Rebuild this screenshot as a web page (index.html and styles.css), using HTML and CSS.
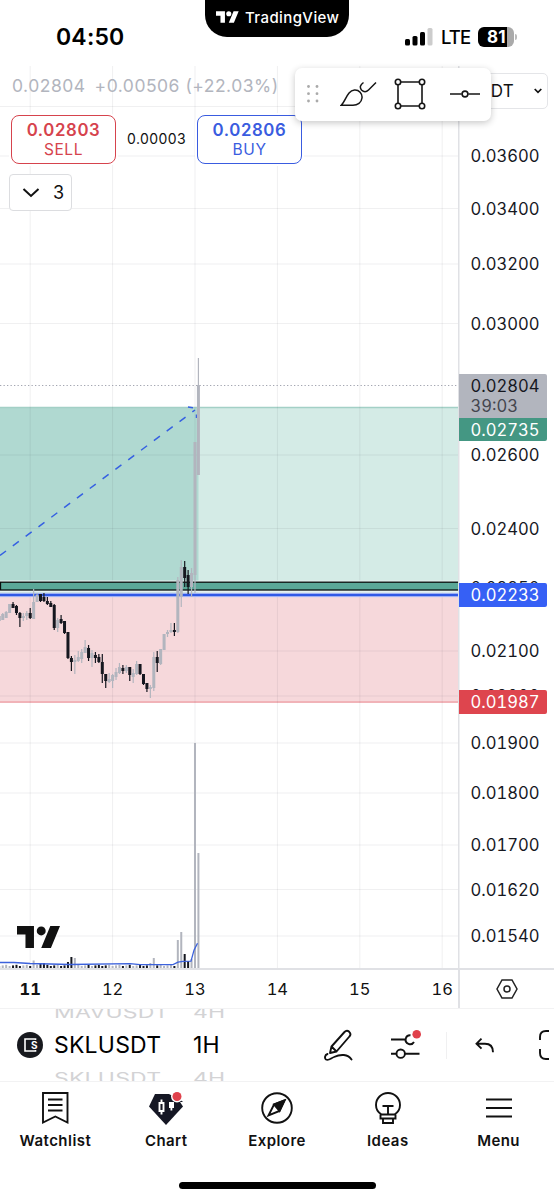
FILE: index.html
```html
<!DOCTYPE html>
<html lang="en">
<head>
<meta charset="utf-8">
<meta name="viewport" content="width=device-width, initial-scale=1">
<title>SKLUSDT 1H</title>
<link rel="stylesheet" href="styles.css">
</head>
<body>
<div class="app">

  <header class="status">
    <div class="clock">04:50</div>
    <div class="brand">
      <svg width="23" height="12" viewBox="0 4 36 18" fill="#fff"><path d="M14 22H7V11H0V4h14v18zM28 22h-8l7.500-18h8L28 22z"/><circle cx="20" cy="8" r="4"/></svg>
      <span>TradingView</span>
    </div>
    <div class="signal">
      <svg width="28" height="18" viewBox="0 0 28 18"><rect x="0" y="11" width="5" height="6.500" rx="1.500"/><rect x="7.500" y="8" width="5" height="9.500" rx="1.500"/><rect x="15" y="4" width="5" height="13.500" rx="1.500"/><rect x="22.500" y="0" width="5" height="17.500" rx="1.500" fill="#ccc"/></svg>
      <span class="network">LTE</span>
      <span class="battery">81</span>
      <span class="battery-tip"></span>
    </div>
  </header>

  <main class="chart">
    <svg class="plot" id="plot" width="458" height="902" viewBox="0 66 458 902">
      <rect x="0" y="407" width="458" height="188" fill="#d4ebe6"/>
      <rect x="0" y="407" width="198.500" height="188" fill="#b0d9d1"/>
      <rect x="0" y="597" width="458" height="106" fill="#f6d8db"/>
      <path d="M0 407.500h458" stroke="#a3d0c6" stroke-width="1.300"/>
      <path d="M0 702h458" stroke="#f1b3b8" stroke-width="2"/>
      <g id="grid" stroke="#2a2e39" stroke-opacity=".07"></g>
      <path d="M0 385.500h458" stroke="#a3a6b1" stroke-width="1.200" stroke-dasharray="1.300 2.200"/>
      <path d="M0 555.500L195 410" stroke="#3560e2" stroke-width="1.500" stroke-dasharray="7.500 8.500" fill="none"/>
      <path d="M188 407l5 .7M196.500 414.500v3.500" stroke="#3560e2" stroke-width="1.500"/>
      <rect x="-1" y="580.500" width="460" height="12" fill="#e6f2ef"/>
      <rect x=".5" y="582.200" width="460" height="7.800" fill="#5ba898" stroke="#0a0f0e" stroke-width="1.300"/>
      <path d="M0 595h458" stroke="#c5cdf7" stroke-width="4.500"/>
      <path d="M0 594.900h458" stroke="#3059e6" stroke-width="2.500"/>
      <g id="candles"></g>
      <g id="volume"></g>
      <path d="M0 962.500h14l16 1 40 1 60-.8 10 1h33l5-2.500 5-.8 8-.2 3-11 3.500-7" fill="none" stroke="#3c62dc" stroke-width="1.300"/>
    </svg>
    <svg class="scale" id="scale" width="96" height="902" viewBox="458 66 96 902">
      <g id="prices"></g>
      <path d="M459 374h86a2 2 0 0 1 2 2v42h-88z" fill="#b2b5be"/>
      <path d="M459 418h88v21a2 2 0 0 1-2 2h-86z" fill="#449783"/>
      <path d="M459 583h86a2 2 0 0 1 2 2v20a2 2 0 0 1-2 2h-86z" fill="#3660f5"/>
      <path d="M459 690h86a2 2 0 0 1 2 2v20a2 2 0 0 1-2 2h-86z" fill="#de454e"/>
      <text x="470.500" y="391.700">0.02804</text>
      <text x="470.500" y="411.500" class="countdown">39:03</text>
      <text x="470.500" y="435.600" class="on-tag">0.02735</text>
      <text x="470.500" y="601" class="on-tag">0.02233</text>
      <text x="470.500" y="708" class="on-tag">0.01987</text>
    </svg>

    <div class="overlay">
      <div class="quote"><span>0.02804</span><span>+0.00506 (+22.03%)</span></div>
      <div class="trade">
        <button class="order sell"><b>0.02803</b><span>SELL</span></button>
        <span class="spread">0.00003</span>
        <button class="order buy"><b>0.02806</b><span>BUY</span></button>
      </div>
      <button class="legend-toggle">
        <svg width="18" height="10" viewBox="0 0 18 10" fill="none" stroke="#111" stroke-width="2"><path d="M1.500 1L9 8l7.500-7"/></svg>
        <span>3</span>
      </button>
    </div>

    <div class="currency">
      <span>USDT</span>
      <svg width="8" height="6" viewBox="0 0 8 6" fill="none" stroke="#111" stroke-width="1.700"><path d="M.7 1L4 4.300 7.300 1"/></svg>
    </div>

    <div class="drawbar">
      <svg class="grip" width="12" height="18" viewBox="0 0 12 18" fill="#aaa"><circle cx="1.500" cy="1.500" r="1.400"/><circle cx="10" cy="1.500" r="1.400"/><circle cx="1.500" cy="8.700" r="1.400"/><circle cx="10" cy="8.700" r="1.400"/><circle cx="1.500" cy="16" r="1.400"/><circle cx="10" cy="16" r="1.400"/></svg>
      <svg class="brush" width="37" height="26" viewBox="0 0 37 26" fill="none" stroke="#161616" stroke-width="1.500"><path d="M1.200 24.300C6 20 7 9.500 14.500 9c4.500-.3 8 3.500 7.500 8-.5 4.500-4.500 7.300-9 7.300zM23.500 1.500C20 4 19.500 6.500 21.500 9c2 2 4.500 2.500 7 0L36 1.500"/></svg>
      <svg class="shape" width="32" height="32" viewBox="0 0 32 32" fill="#fff" stroke="#161616" stroke-width="1.600"><path d="M4 4h24v24H4z"/><circle cx="4" cy="4" r="2.700"/><circle cx="28" cy="4" r="2.700"/><circle cx="4" cy="28" r="2.700"/><circle cx="28" cy="28" r="2.700"/></svg>
      <svg width="30" height="8" viewBox="0 0 30 8" fill="none" stroke="#161616" stroke-width="1.600"><path d="M0 4h11.700M18.300 4H30"/><circle cx="15" cy="4" r="2.900"/></svg>
    </div>

    <svg class="watermark" width="43" height="22" viewBox="0 4 35.5 18" fill="#111"><path d="M14 22H7V11H0V4h14v18zM28 22h-8l7.500-18h8L28 22z"/><circle cx="20" cy="8" r="3.700"/></svg>
  </main>

  <div class="timescale">
    <div class="days"><b>11</b><span>12</span><span>13</span><span>14</span><span>15</span><span>16</span></div>
    <div class="settings">
      <svg width="22" height="20" viewBox="0 0 22 20" fill="none" stroke="#222" stroke-width="1.500"><path d="M6 1h10l5 9-5 9H6l-5-9z"/><circle cx="11" cy="10" r="3"/></svg>
    </div>
  </div>

  <div class="toolbar">
    <svg class="coin" width="26" height="26" viewBox="0 0 26 26"><circle cx="13" cy="13" r="13" fill="#17191e"/><path d="M18.500 8V7H8v12h10.500v-1" fill="none" stroke="#fff" stroke-width="1.600"/><text x="14" y="17" class="coin-letter">S</text></svg>
    <div class="wheel symbol"><span class="faded">MAVUSDT</span><span>SKLUSDT</span><span class="faded">SKLUSDT</span></div>
    <div class="wheel interval"><span class="faded">4H</span><span>1H</span><span class="faded">4H</span></div>
    <div class="tools">
      <svg class="pencil" width="30" height="33" viewBox="0 0 30 33" fill="none" stroke="#111" stroke-width="1.900" stroke-linejoin="round" stroke-linecap="round"><path d="M8.500 17.500L21.500 3c1.500-1.600 3.200-1.600 4.700-.2 1.500 1.500 1.600 3.200.2 4.700L13.500 22.500 7 24zM8.500 17.500l5 5M4.500 25c-3 1-3 4.500-1.500 5.500 2.500 1.500 4.500-1 8-2.500 6.500-3 14-3 17.500 2.500"/></svg>
      <svg class="sliders" width="31" height="30" viewBox="0 0 31 30" fill="none" stroke="#111" stroke-width="1.900"><path d="M0 9.500h15M23 12a4.500 4.500 0 1 1-3.500-6.800M0 23.700h5.500M14 23.700h14.500"/><circle cx="9.700" cy="23.700" r="4.200"/><circle cx="25.700" cy="4.300" r="4.300" fill="#e0414b" stroke="none"/></svg>
      <i class="divider"></i>
      <svg class="undo" width="20" height="15" viewBox="0 0 20 15" fill="none" stroke="#111" stroke-width="1.900"><path d="M6.500.7L1.500 5.700l5 5M1.500 5.700H10c5 0 8 3 8 8.500"/></svg>
      <svg class="expand" width="30" height="30" viewBox="0 0 30 30" fill="none" stroke="#111" stroke-width="1.900"><path d="M10 1H7C3 1 1 3 1 7v3M1 19v4c0 4 2 6 6 6h3M20 1h3c4 0 6 2 6 6v3M29 19v4c0 4-2 6-6 6h-3"/></svg>
    </div>
  </div>

  <nav class="tabs">
    <a class="tab">
      <svg width="32" height="34" viewBox="0 0 32 34" fill="none" stroke="#111" stroke-width="1.900"><path d="M4 2h24.500v29.500l-12.200-6L4 31.500zM9 8.500h14.500M9 14h14.500M9 19.500h14.500"/></svg>
      <span>Watchlist</span>
    </a>
    <a class="tab">
      <svg width="34" height="34" viewBox="0 0 34 34"><path d="M6 3h18l9 0 1 12.500L17 34 0 15.500z" fill="#151724"/><path d="M20 0h14v10.500L20 3z" fill="#fff"/><path d="M34 15.500L31 11h3z" fill="#fff"/><path d="M10.500 12h4v8h-4zM12.500 8.500V12M12.500 20v3.500" stroke="#fff" stroke-width="1.900" fill="none"/><path d="M20 11h5v6h-1.700v2.500h-1.800V17H20z" fill="#fff"/><circle cx="28" cy="5.500" r="6" fill="#fff"/><circle cx="28" cy="5.500" r="4.500" fill="#e0414b"/></svg>
      <span>Chart</span>
    </a>
    <a class="tab">
      <svg width="34" height="34" viewBox="0 0 34 34" fill="none" stroke="#111" stroke-width="1.900"><circle cx="17" cy="17" r="14.800"/><path d="M24.500 9.500L14 13.500 8.500 24.500l11-4.500z"/><path d="M24.500 9.500L14 13.500l5.500 6.500z" fill="#111"/></svg>
      <span>Explore</span>
    </a>
    <a class="tab">
      <svg width="32" height="34" viewBox="0 0 32 34" fill="none" stroke="#111" stroke-width="1.900"><path d="M9.500 23.500C5.500 21 4 18 4 14a12 12 0 0 1 24 0c0 4-1.500 7-5.500 9.500M8.500 23.500h15v4h-15zM11 27.500h10V32H11zM10.500 15h11M16 15v8.500"/></svg>
      <span>Ideas</span>
    </a>
    <a class="tab">
      <svg width="32" height="34" viewBox="0 0 32 34" fill="none" stroke="#111" stroke-width="1.900"><path d="M3 8.500h26M3 17h26M3 25.500h26"/></svg>
      <span>Menu</span>
    </a>
  </nav>
  <div class="home"></div>
</div>

<script>
    // price -> y of its grid line
    var levels = [["", 106.5], ["0.03600", 156], ["0.03400", 208.5], ["0.03200", 264], ["0.03000", 323.5],
        ["0.02600", 455], ["0.02400", 528.5], ["0.02250", 588], ["0.02100", 651], ["0.02000", 696], ["0.01900", 743],
        ["0.01800", 793], ["0.01700", 845], ["0.01620", 889.5], ["0.01540", 936]];

    // one row per hour, from nine hours before the 11th: high, body top, body bottom, low, falling
    var bars = [
        [616, 616, 621, 621, 0], [613, 614, 620, 620, 0], [611, 612, 618, 618, 0], [604, 604, 613, 613, 0],
        [602, 604, 608, 608, 1], [605, 606, 613, 615, 1], [612, 613, 618, 627, 1], [613, 616, 618, 621, 0],
        [611, 613, 616, 620, 0], [608, 613, 618, 619, 1], [589, 602, 619, 619, 0], [593, 595, 602, 602, 0],
        [594, 594, 601, 602, 1], [593, 597, 601, 602, 1], [597, 601, 604, 605, 1], [601, 603, 607, 607, 1],
        [604, 605, 628, 630, 1], [618, 620, 628, 632, 0], [615, 619, 623, 624, 1], [621, 621, 633, 634, 1],
        [632, 632, 658, 659, 1], [656, 658, 662, 671, 1], [655, 660, 662, 674, 0], [651, 657, 661, 662, 0],
        [649, 652, 659, 663, 0], [640, 647, 653, 653, 0], [645, 648, 658, 661, 1], [650, 653, 658, 667, 0],
        [652, 655, 658, 663, 1], [654, 657, 662, 663, 1], [654, 662, 674, 683, 1], [674, 674, 681, 688, 1],
        [673, 679, 682, 683, 0], [674, 675, 681, 688, 0], [668, 672, 677, 680, 0], [663, 667, 673, 674, 0],
        [665, 668, 671, 674, 1], [665, 667, 671, 673, 0], [667, 667, 675, 681, 1], [669, 673, 677, 683, 0],
        [661, 664, 674, 675, 0], [664, 664, 674, 675, 1], [674, 674, 684, 685, 1], [683, 683, 689, 692, 1],
        [685, 687, 689, 698, 0], [652, 657, 688, 691, 0], [651, 657, 663, 672, 1], [649, 649, 664, 665, 0],
        [634, 634, 650, 650, 0], [630, 632, 634, 637, 0], [623, 630, 632, 633, 0], [623, 630, 632, 636, 1],
        [577, 580, 632, 633, 0], [560, 567, 597, 607, 0], [561, 567, 578, 587, 1], [570, 575, 587, 594, 1],
        [568, 573, 587, 597, 0], [442, 442, 575, 593, 0], [358, 385, 475, 475, 0]];

    // hours with volume above the floor, by hour from the 11th
    var spikes = {1: 7.5, 3: 5, 4: 5, 11: 6, 12: 11, 13: 10, 35: 5, 36: 10, 43: 28, 44: 36, 45: 14, 46: 7, 47: 9, 48: 225, 49: 115};

    var grid = "", prices = "", candles = "", volume = "";

    levels.forEach(function (l) {
        grid += `<path d="M0 ${l[1]}h458"/>`;
        prices += `<text x="470.5" y="${l[1] + 6}">${l[0]}</text>`;
    });
    for (var d = 0; d < 6; d++) {
        grid += `<path d="M${30.2 + d * 82.4} 66v902"/>`;
    }

    bars.forEach(function (b, i) {
        var hour = i - 9;
        var x = 30.2 + hour * 3.433;
        var color = b[4] ? "#15171f" : "#b2b5be";
        candles += `<rect x="${x - 0.6}" y="${b[0]}" width="1.2" height="${b[3] - b[0]}" fill="${color}"/>`;
        candles += `<rect x="${x - 1.5}" y="${b[1]}" width="3" height="${b[2] - b[1]}" fill="${color}"/>`;
        var v = spikes[hour] || 2 + (i * 7 % 3) * 0.6;
        volume += `<rect x="${x - 1}" y="${968 - v}" width="2" height="${v}" fill="${color}"/>`;
    });

    document.getElementById('grid').innerHTML = grid;
    document.getElementById('prices').innerHTML = prices;
    document.getElementById('candles').innerHTML = candles;
    document.getElementById('volume').innerHTML = volume;
</script>
</body>
</html>
```
FILE: styles.css
```css
* {
  box-sizing: border-box;
}

body {
  margin: 0;
  background-color: #fff;
  color: #111;
  font-family: Inter, "Liberation Sans", sans-serif;
}

button {
  font-family: inherit;
  background-color: #fff;
  padding: 0;
}

svg {
  display: block;
  flex: none;
}

.app {
  display: flex;
  flex-direction: column;
  width: 554px;
  height: 1200px;
  overflow: hidden;
}

/* phone status bar */
.status {
  display: grid;
  grid-template-columns: 205px 144px 205px;
  height: 66px;
}

.clock {
  padding: 24px 0 0 56px;
  font-size: 23px;
  line-height: 27px;
  font-weight: 600;
  letter-spacing: 0.2px;
  color: #000;
}

.brand {
  display: flex;
  align-items: center;
  gap: 6px;
  height: 37px;
  padding: 0 0 3px 11px;
  background-color: #000;
  color: #fff;
  border-radius: 0 0 22px 22px;
  font-size: 15px;
  font-weight: 500;
  letter-spacing: 0.4px;
}

.signal {
  display: flex;
  align-items: center;
  height: 22px;
  margin: 26px 0 0 56px;
  color: #000;
}

.network {
  margin-left: 8px;
  font-size: 18.5px;
  font-weight: 500;
  letter-spacing: -0.9px;
}

.battery {
  margin-left: 8px;
  width: 36px;
  height: 20px;
  border-radius: 6px;
  background: linear-gradient(90deg, #000 81%, #aaa 81%);
  color: #fff;
  font-size: 17px;
  font-weight: 700;
  line-height: 20px;
  text-align: center;
}

.battery-tip {
  width: 2px;
  height: 6px;
  margin-left: 1px;
  border-radius: 0 2px 2px 0;
  background-color: #bbb;
}

/* chart */
.chart {
  position: relative;
  display: flex;
  height: 902px;
}

.scale {
  box-shadow: inset 1.5px 0 0 #e0e1e5;
  font-size: 16.6px;
  font-variant-numeric: tabular-nums;
}

.scale text {
  fill: #16181f;
}

.scale .countdown {
  fill: #44464e;
}

.scale .on-tag {
  fill: #fff;
}

.overlay {
  position: absolute;
  top: 0;
  left: 0;
  width: 302px;
}

.quote {
  display: flex;
  gap: 9px;
  padding: 9px 0 1px 12px;
  font-size: 17.5px;
  line-height: 22px;
  letter-spacing: 0.5px;
  color: #b2b5be;
  white-space: nowrap;
}

.trade {
  display: flex;
  align-items: center;
  justify-content: space-between;
  padding: 17px 0 0 11px;
}

.order {
  display: flex;
  flex-direction: column;
  align-items: center;
  justify-content: center;
  width: 105px;
  height: 49px;
  border: 1.8px solid;
  border-radius: 8px;
  box-shadow: 0 0 0 2px #fff;
  font-size: 15.5px;
  line-height: 20px;
  letter-spacing: 0.6px;
}

.order b {
  font-size: 16.8px;
  font-weight: 600;
}

.sell {
  color: #d6434d;
}

.buy {
  color: #3a5ce0;
}

.spread {
  padding-bottom: 2px;
  font-size: 14px;
  letter-spacing: 0.4px;
}

.legend-toggle {
  display: flex;
  align-items: center;
  justify-content: space-between;
  width: 63px;
  height: 37px;
  margin: 10px 0 0 9px;
  padding: 0 7px 0 12px;
  border: 1.5px solid #dcdde0;
  border-radius: 4px;
  color: #111;
  font-size: 18px;
}

.currency {
  position: absolute;
  top: 7px;
  right: 6px;
  display: flex;
  align-items: center;
  justify-content: flex-end;
  gap: 20px;
  width: 88px;
  height: 36px;
  padding-right: 5px;
  border: 1.5px solid #e4e5e8;
  border-radius: 5px;
  background-color: #fff;
  font-size: 17px;
  letter-spacing: 0.2px;
}

.drawbar {
  position: absolute;
  top: 2px;
  left: 295px;
  display: flex;
  align-items: center;
  width: 196px;
  height: 53px;
  padding: 0 0 2px 12px;
  border-radius: 7px;
  background-color: #fff;
  box-shadow: 0 2px 7px rgba(0, 0, 0, 0.22);
}

.brush {
  margin-left: 21px;
}

.shape {
  margin: 0 24px 0 17px;
}

.watermark {
  position: absolute;
  left: 17px;
  bottom: 20px;
}

.timescale {
  display: flex;
  height: 41px;
  border-top: 2px solid #e0e1e5;
  border-bottom: 1px solid #f2f2f3;
}

.days {
  display: grid;
  grid-template-columns: repeat(6, 82.4px);
  width: 469px;
  margin-left: -11px;
  line-height: 39px;
  font-size: 16.5px;
  font-variant-numeric: tabular-nums;
  text-align: center;
  flex: none;
}

.days b {
  font-weight: 700;
}

.settings {
  display: flex;
  align-items: center;
  justify-content: center;
  width: 96px;
  border-left: 2px solid #e0e1e5;
}

/* bottom bars */
.toolbar {
  display: flex;
  align-items: center;
  height: 73px;
  padding-left: 17px;
  border-bottom: 1px solid #f2f2f3;
  overflow: hidden;
}

.coin-letter {
  font-size: 10px;
  font-weight: 700;
  fill: #fff;
}

.wheel {
  display: flex;
  flex: none;
  flex-direction: column;
  justify-content: center;
  font-size: 23px;
  line-height: 33px;
  letter-spacing: 0.2px;
  color: #000;
}

.wheel .faded {
  color: #d3d3d5;
  transform: scaleY(0.72);
}

.symbol {
  width: 139px;
  margin-left: 11px;
}

.interval {
  width: 130px;
}

.tools {
  display: flex;
  flex: none;
  align-items: center;
}

.sliders {
  margin-left: 38px;
}

.divider {
  width: 1px;
  height: 27px;
  margin: 0 28px 0 24px;
  background-color: #f0f0f1;
}

.expand {
  margin-left: 44px;
}

.tabs {
  display: flex;
  height: 76px;
  padding-top: 9px;
}

.tab {
  display: flex;
  flex: 1;
  flex-direction: column;
  align-items: center;
  gap: 6px;
  font-size: 15px;
  line-height: 19px;
  font-weight: 600;
  letter-spacing: 0.45px;
}

.home {
  width: 197px;
  height: 7px;
  margin: 24px auto 0;
  border-radius: 4px;
  background-color: #000;
}
```
